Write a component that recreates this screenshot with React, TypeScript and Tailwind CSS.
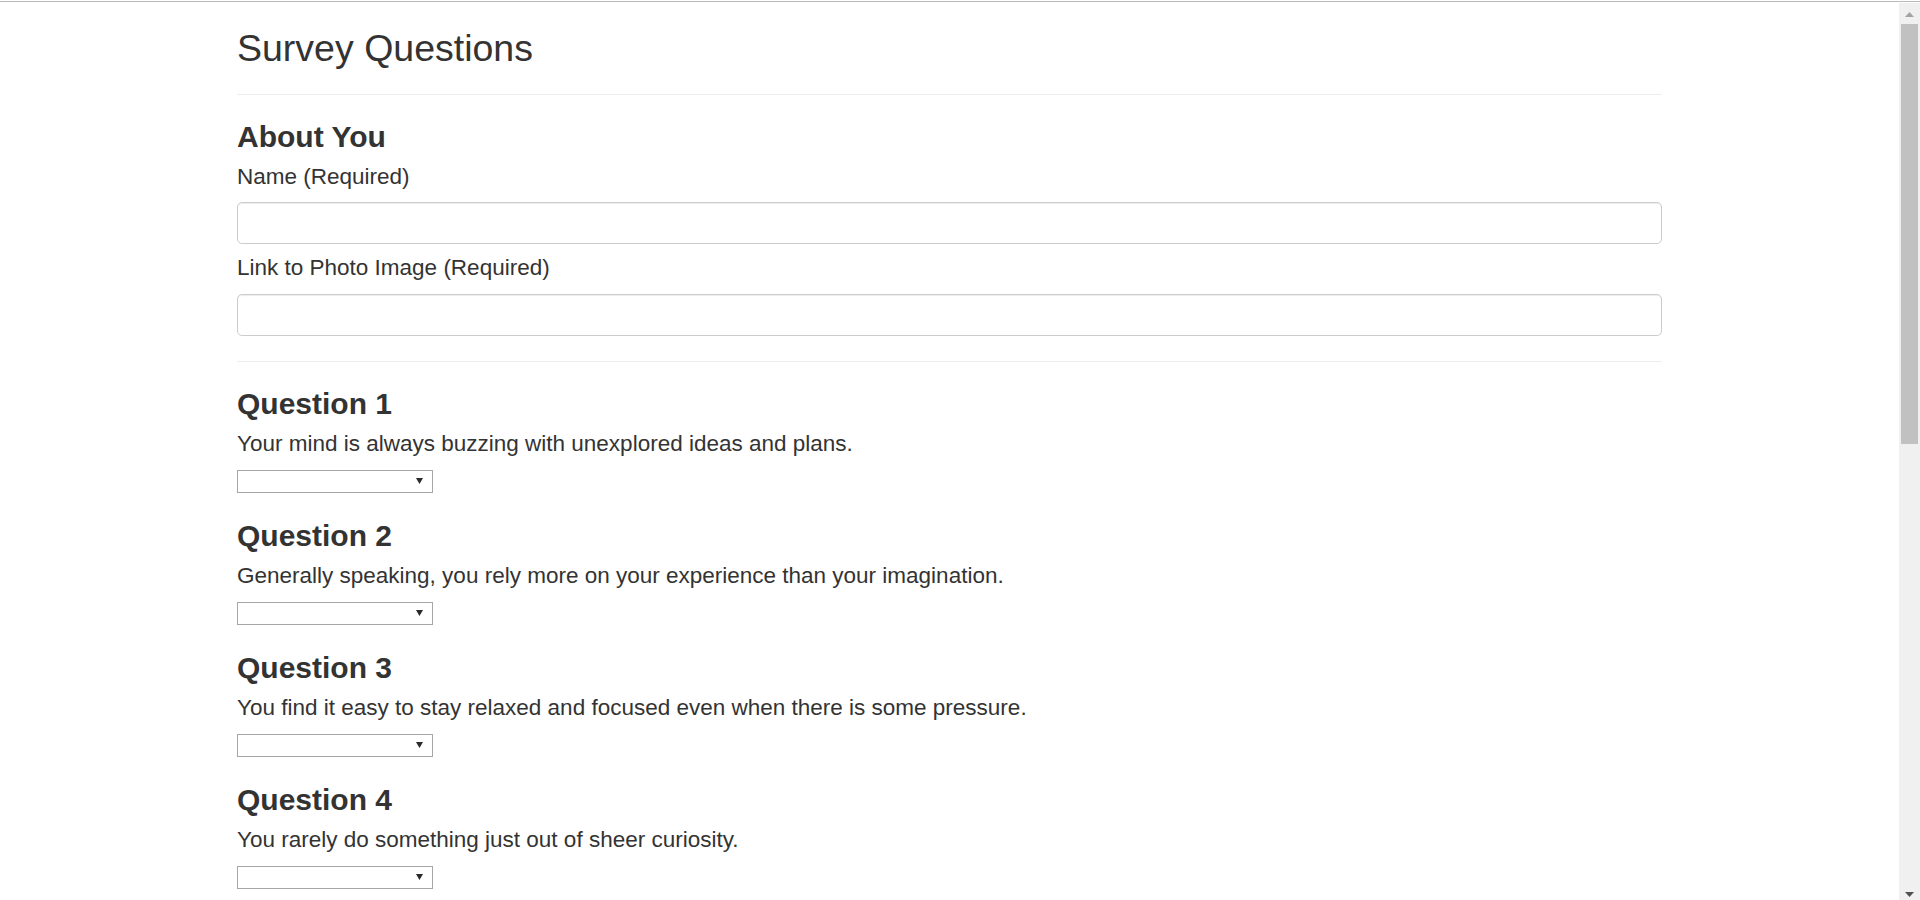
import React from 'react';

const questions: string[] = [
  'Your mind is always buzzing with unexplored ideas and plans.',
  'Generally speaking, you rely more on your experience than your imagination.',
  'You find it easy to stay relaxed and focused even when there is some pressure.',
  'You rarely do something just out of sheer curiosity.',
  'People can rarely upset you.',
  "It is often difficult for you to relate to other people's feelings.",
  'In a discussion, truth should be more important than people\u2019s sensitivities.',
  'You rarely get carried away by fantasies and ideas.',
  "You think that everyone's views should be respected regardless of whether they are supported by facts or not.",
  'You feel more energetic after spending time with a group of people.',
];

const answers = ['1 (Strongly Disagree)', '2', '3', '4', '5 (Strongly Agree)'];

const AnswerSelect: React.FC<{ id: string }> = ({ id }) => (
  <div className="relative mt-[10px] h-[23px] w-[196px]">
    <select
      id={id}
      defaultValue=""
      className="h-full w-full appearance-none border border-[#a6a6a6] bg-white px-1 text-[15px] text-[#333] outline-none"
    >
      <option value="" />
      {answers.map((a, i) => (
        <option key={a} value={i + 1}>
          {a}
        </option>
      ))}
    </select>
    <svg
      className="pointer-events-none absolute right-[10px] top-[8px]"
      width="7"
      height="6"
      viewBox="0 0 7 6"
    >
      <path d="M0 0H7L3.5 6Z" fill="#2b2b2b" />
    </svg>
  </div>
);

// window scrollbar, drawn (the headless browser hides real ones)
const Scrollbar: React.FC = () => (
  <div className="flex h-full w-[21px] shrink-0 flex-col bg-[#f0f0f0]">
    <div className="flex h-[21px] justify-center pt-[9px]">
      <svg width="9" height="5" viewBox="0 0 9 5">
        <path d="M4.5 0L9 5H0Z" fill="#a3a3a3" />
      </svg>
    </div>
    <div className="mx-[2px] h-[420px] bg-[#c1c1c1]" />
    <div className="flex-1" />
    <div className="flex h-[21px] justify-center pt-[13px]">
      <svg width="9" height="5" viewBox="0 0 9 5">
        <path d="M0 0H9L4.5 5Z" fill="#505050" />
      </svg>
    </div>
  </div>
);

export default function App() {
  return (
    <div className="flex h-screen flex-col overflow-hidden bg-white pt-px font-['Liberation_Sans',Arial,Helvetica,sans-serif] text-[#333]">
      <div className="h-px shrink-0 bg-[#b9b9b9]" />
      <div className="mt-px flex min-h-0 flex-1">
        <main className="min-w-0 flex-1 overflow-hidden">
          <div className="mx-auto w-[1425px] pb-[60px]">
            <h2 className="mt-[25px] text-[37.5px] font-normal leading-[41px]">Survey Questions</h2>
            <hr className="mt-[25px] border-0 border-t border-[#eee]" />

            <h3 className="mt-[25px] text-[30px] font-bold leading-[33px]">About You</h3>
            <label htmlFor="name" className="mt-[8px] block text-[22.5px] leading-[32px]">
              Name (Required)
            </label>
            <input
              id="name"
              type="text"
              className="mt-[9px] block h-[42px] w-full rounded-[5px] border border-[#ccc] bg-white px-[15px] text-[22.5px] shadow-[inset_0_1px_1px_rgba(0,0,0,0.075)] outline-none"
            />
            <label htmlFor="photo" className="mt-[8px] block text-[22.5px] leading-[32px]">
              Link to Photo Image (Required)
            </label>
            <input
              id="photo"
              type="text"
              className="mt-[10px] block h-[42px] w-full rounded-[5px] border border-[#ccc] bg-white px-[15px] text-[22.5px] shadow-[inset_0_1px_1px_rgba(0,0,0,0.075)] outline-none"
            />
            <hr className="mt-[25px] border-0 border-t border-[#eee]" />

            {questions.map((q, i) => (
              <div key={i} className={i === 0 ? 'mt-[25px]' : 'mt-[26px]'}>
                <h3 className="text-[30px] font-bold leading-[33px]">Question {i + 1}</h3>
                <p className="mt-[8px] text-[22.5px] leading-[32px]">{q}</p>
                <AnswerSelect id={`q${i + 1}`} />
              </div>
            ))}

            <button
              type="submit"
              className="mt-[30px] rounded-[5px] border border-[#2e6da4] bg-[#337ab7] px-[15px] py-[7px] text-[22.5px] leading-[32px] text-white"
            >
              Submit
            </button>
          </div>
        </main>
        <Scrollbar />
      </div>
    </div>
  );
}
